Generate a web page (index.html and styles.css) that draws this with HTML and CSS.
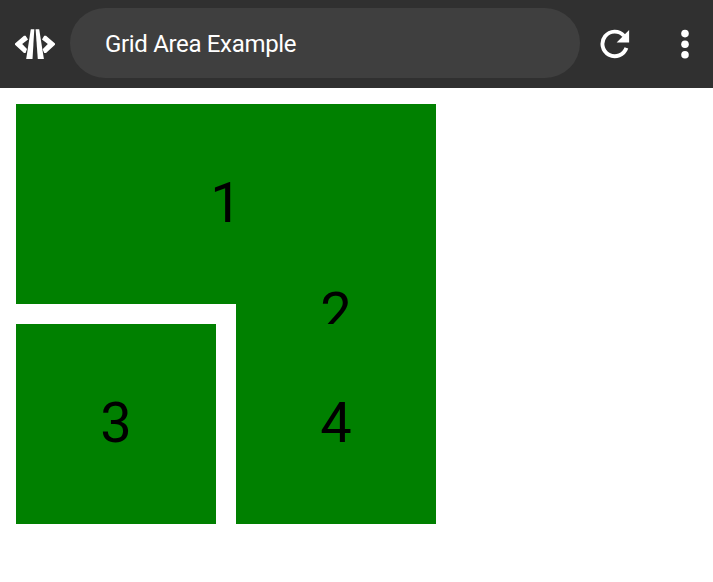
FILE: index.html
```html
<!DOCTYPE html>
<html lang="en">
<head>
<meta charset="utf-8">
<title>Grid Area Example</title>
<link rel="stylesheet" href="styles.css">
</head>
<body>
<header class="toolbar">
  <svg class="logo" viewBox="0 0 40 30" fill="#fff">
    <path d="M9 6.8H10.6L13 10.4L7.2 15.1L12 20L10.6 24H9L0 15.7V14.5Z"/>
    <path d="M31 6.8H29.2L27 10.4L32.8 15.1L27.6 20.2L29.2 24H31L40 15.7V14.5Z"/>
    <path d="M15.8 0.3H19.3L17.5 30H11.2Z"/>
    <path d="M20.6 0.3H24.2L28.9 30H22.8Z"/>
  </svg>
  <div class="address">Grid Area Example</div>
  <svg class="reload" viewBox="0 0 30 30">
    <path d="M23.9 6.7A12.3 12.3 0 1 0 26.4 18.9" fill="none" stroke="#fff" stroke-width="3.9"/>
    <path d="M29.1 1V13.5H16.6Z" fill="#fff"/>
  </svg>
  <svg class="more" viewBox="0 0 8 30" fill="#fff">
    <circle cx="4" cy="4.6" r="3.8"/><circle cx="4" cy="15.2" r="3.8"/><circle cx="4" cy="25.7" r="3.8"/>
  </svg>
</header>
<main class="grid">
  <div class="item one">1</div>
  <div class="item two">2</div>
  <div class="item three">3</div>
  <div class="item four">4</div>
</main>
</body>
</html>
```
FILE: styles.css
```css
body {
  margin: 0;
  background: #fff;
  font-family: Roboto, sans-serif;
}

.toolbar {
  display: flex;
  align-items: center;
  box-sizing: border-box;
  height: 88px;
  padding: 0 24px 2px 15px;
  background: #303030;
}

.logo {
  width: 40px;
  height: 30px;
  margin: 2px 15px 0 0;
}

.address {
  box-sizing: border-box;
  width: 510px;
  height: 70px;
  padding-left: 35px;
  border-radius: 35px;
  background: #3f3f3f;
  color: #fff;
  font-size: 24px;
  letter-spacing: -0.33px;
  line-height: 72px;
}

.reload {
  width: 30px;
  height: 30px;
  margin: 2px 0 0 20px;
}

.more {
  width: 8px;
  height: 30px;
  margin: 2px 0 0 auto;
}

.grid {
  display: grid;
  grid-template-columns: 200px 200px;
  grid-template-rows: 200px 200px;
  gap: 20px;
  margin: 16px;
}

.item {
  display: grid;
  place-items: center;
  padding-bottom: 2px;
  box-sizing: border-box;
  background: green;
  color: #000;
  font-size: 56px;
}

.one { grid-area: 1 / 1 / 2 / 3; }
.two { grid-area: 1 / 2 / 3 / 3; }
.three { grid-area: 2 / 1 / 3 / 2; }
.four { grid-area: 2 / 2 / 3 / 3; }
```
